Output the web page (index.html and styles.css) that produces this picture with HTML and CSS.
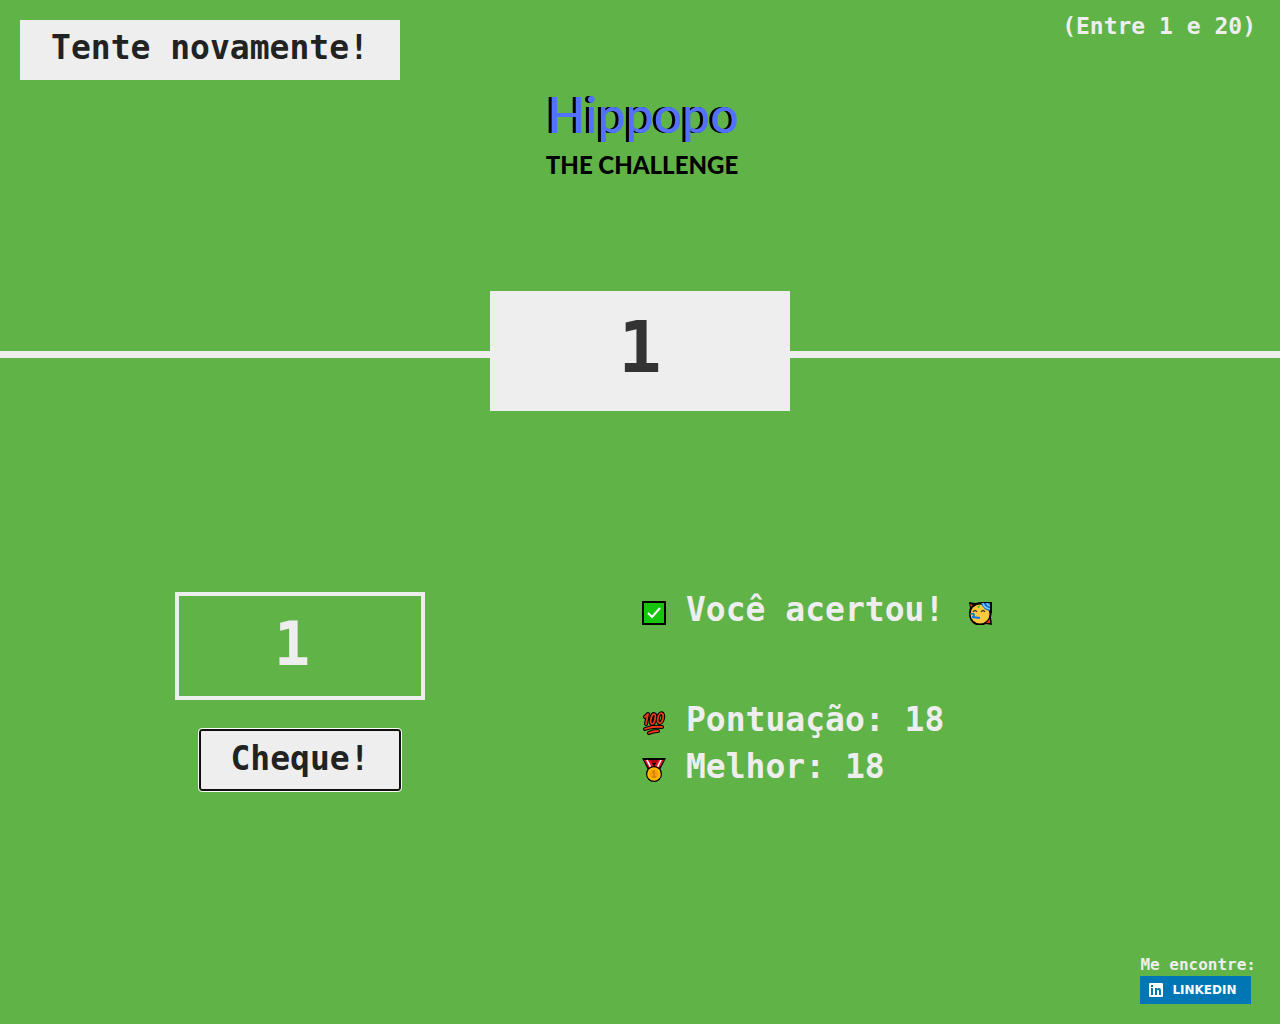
FILE: index.html
```html
<!DOCTYPE html>
<html lang="pt-BR">
<head>
<meta charset="UTF-8">
<meta name="viewport" content="width=device-width, initial-scale=1">
<title>Hippopo - The Challenge</title>
<link rel="stylesheet" href="styles.css">
</head>
<body>
<header class="header">
  <div class="topbar">
    <button class="btn again" type="button">Tente novamente!</button>
    <p class="between">(Entre 1 e 20)</p>
  </div>
  <h1 class="logo">
    <span class="logo-name">Hippopo</span>
    <span class="logo-tag">THE CHALLENGE</span>
  </h1>
  <div class="number">1</div>
</header>
<main class="main">
  <section class="play">
    <input class="guess" type="number" min="1" max="20" value="1" aria-label="Seu palpite">
    <button class="btn check" type="button">Cheque!</button>
  </section>
  <section class="status">
    <p class="row message">
      <svg class="icon" viewBox="0 0 24 24" aria-hidden="true"><path d="M1 1h22v22H1z" fill="#16c60c" stroke="#000" stroke-width="2"/><path d="M6 12l4 4 8-9" fill="none" stroke="#fff" stroke-width="2"/></svg>
      <span class="label">Você acertou!</span>
      <svg class="icon party" viewBox="0 0 24 24" aria-hidden="true"><path d="M1 1l6 1 6-1h11v10l-1 5 1 8-6-1q-6 3-12 0-5-4-5-10 0-4 1-6z" fill="#000"/><circle cx="12" cy="13" r="9.5" fill="#ffc83d"/><path d="M13 2h9v8q-7-1-9-8z" fill="#0f6cbd"/><path d="M15 2q1 5 7 6M19 2q0 2 3 3" fill="none" stroke="#7cc7ff" stroke-width="1.5"/><path d="M5 11q2-3 4 0M13 11q2-3 4 0" fill="none" stroke="#433b20" stroke-width="1.3"/><path d="M3 13q3-1 3 1t-2 2l8 1" fill="none" stroke="#0078d7" stroke-width="1.8"/><path d="M9 6l3-2-1 3z" fill="#16c60c"/><path d="M2 3l3 1-2 2zM18 22l4-4v4z" fill="#f03a17"/></svg>
    </p>
    <p class="row">
      <svg class="icon" viewBox="0 0 24 24" aria-hidden="true"><g fill="none" stroke-linecap="round" stroke-linejoin="round"><g stroke="#000" stroke-width="4"><path d="M3 6l3-3-2 10"/><ellipse cx="11" cy="8" rx="2" ry="5" transform="rotate(14 11 8)"/><ellipse cx="18.500" cy="7" rx="2.500" ry="5" transform="rotate(14 18 7)"/><path d="M3 18q8-3 17-2M7 22q4-2 9-2"/></g><g stroke="#f03a17" stroke-width="1.8"><path d="M3 6l3-3-2 10"/><ellipse cx="11" cy="8" rx="2" ry="5" transform="rotate(14 11 8)"/><ellipse cx="18.500" cy="7" rx="2.500" ry="5" transform="rotate(14 18 7)"/><path d="M3 18q8-3 17-2M7 22q4-2 9-2"/></g></g></svg>
      <span class="label">Pontuação: <span class="score">18</span></span>
    </p>
    <p class="row">
      <svg class="icon" viewBox="0 0 24 24" aria-hidden="true"><path d="M0 0h24l-6 12H6z" fill="#000"/><path d="M2 2h8l4 8-6 2z" fill="#e81224"/><path d="M22 2h-8l-4 8 6 2z" fill="#e81224"/><path d="M5 2l4 8M19 2l-4 8" stroke="#fff" stroke-width="1.6"/><path d="M8 2h8l-2 3h-4z" fill="#a4000f"/><path d="M10 5h4l-2 4z" fill="#000"/><circle cx="12" cy="16" r="8" fill="#000"/><circle cx="12" cy="16" r="6.8" fill="#ffb900"/><circle cx="12" cy="16" r="4.5" fill="#f7a000"/><path d="M10.500 14l1.500-1v6M10 19h4" fill="none" stroke="#c77800" stroke-width="1.2"/></svg>
      <span class="label">Melhor: <span class="highscore">18</span></span>
    </p>
  </section>
</main>
<footer class="footer">
  <div class="contact">
    <p class="contact-title">Me encontre:</p>
    <a class="badge" href="#">
      <svg class="badge-icon" viewBox="0 0 14 14" aria-hidden="true"><rect width="14" height="14" rx="1" fill="#fff"/><path d="M2 5h2v7H2zM2 2h2v2H2zM6 5h2v1q1-1 2-1 2 0 2 3v4h-2V8q0-1-1-1T8 8v4H6z" fill="#0077b5"/></svg>
      LINKEDIN
    </a>
  </div>
</footer>
</body>
</html>
```

FILE: styles.css
```css
* {
  box-sizing: border-box;
  margin: 0;
  padding: 0;
}

body {
  display: grid;
  grid-template-rows: 35vh 1fr auto;
  min-height: 100vh;
  background: #60b347;
  color: #eee;
  font-family: "DejaVu Sans Mono", monospace;
  font-weight: 700;
}

.header {
  position: relative;
  border-bottom: 7px solid #eee;
}

.topbar {
  display: flex;
  justify-content: space-between;
  align-items: flex-start;
  padding: 20px 24px 0 20px;
}

.btn {
  height: 60px;
  padding: 0 24px 4px;
  border: none;
  background: #eee;
  color: #222;
  font: inherit;
  font-size: 33px;
  line-height: 56px;
  cursor: pointer;
}

.again {
  min-width: 380px;
}

.between {
  font-size: 23px;
  line-height: 12px;
}

.logo {
  display: flex;
  flex-direction: column;
  align-items: center;
  padding: 4px 0 0 4px;
  font-family: Lato, sans-serif;
}

.logo-name {
  padding-left: 2px;
  color: #5271ff;
  font-size: 50px;
  font-weight: 500;
  line-height: 60px;
  text-shadow: -1px 0 #000, -2px 0 #000, -3px 0 #000;
}

.logo-tag {
  color: #000;
  font-size: 24px;
  font-weight: 900;
  line-height: 42px;
}

.number {
  position: absolute;
  bottom: -60px;
  left: 50%;
  width: 300px;
  height: 120px;
  padding-bottom: 8px;
  transform: translateX(-50%);
  background: #eee;
  color: #333;
  font-size: 72px;
  line-height: 112px;
  text-align: center;
}

.main {
  display: grid;
  grid-template-columns: 1fr 1fr;
  align-items: center;
  padding-top: 70px;
}

.play {
  display: flex;
  flex-direction: column;
  align-items: center;
  gap: 30px;
  padding-right: 40px;
}

.guess {
  width: 250px;
  height: 108px;
  padding: 0 16px 4px 0;
  border: 4px solid #eee;
  background: none;
  color: #eee;
  font: inherit;
  font-size: 60px;
  text-align: center;
  appearance: textfield;
}

.guess::-webkit-inner-spin-button {
  appearance: none;
}

.check {
  min-width: 200px;
  outline: 1px solid #fff;
  outline-offset: 1px;
  border: 1px solid #101010;
  box-shadow: 0 0 0 1px #101010;
  border-radius: 2px;
}

.row {
  display: flex;
  align-items: center;
  gap: 20px;
  height: 47px;
  padding-left: 2px;
  font-size: 33px;
}

.message {
  margin-bottom: 63px;
}

.label {
  padding-bottom: 6px;
}

.icon {
  flex: none;
  width: 24px;
  height: 24px;
}

.party {
  margin-left: 4px;
}

.footer {
  display: flex;
  justify-content: flex-end;
  padding: 0 24px 20px;
}

.contact-title {
  font-size: 16px;
  line-height: 22px;
}

.badge {
  display: inline-flex;
  align-items: center;
  gap: 9px;
  height: 28px;
  padding: 0 14px 0 9px;
  background: #0077b5;
  color: #fff;
  font-family: "DejaVu Sans", sans-serif;
  font-size: 12px;
  text-decoration: none;
}

.badge-icon {
  width: 14px;
  height: 14px;
}
```
